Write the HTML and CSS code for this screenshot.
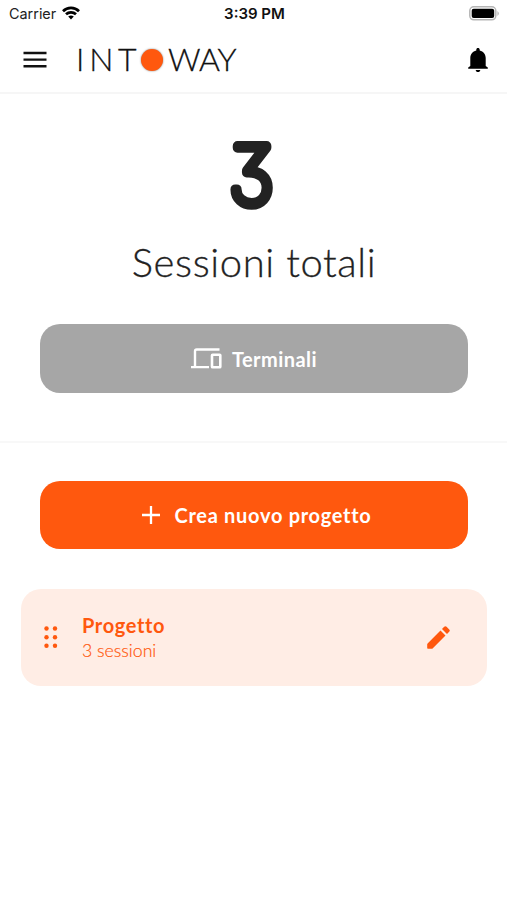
FILE: index.html
```
<!DOCTYPE html>
<html lang="it">
<head>
<meta charset="utf-8">
<title>Intoway</title>
<link rel="stylesheet" href="styles.css">
</head>
<body>
<div class="status">
  <div class="carrier"><span>Carrier</span>
    <svg width="18" height="14" viewBox="0 0 18 14" fill="none" stroke="#000" stroke-width="2.7"><path d="M1 5.2C5.5.7 12.500.7 17 5.200"/><path d="M4 8.300c2.800-2.700 7.200-2.700 10 0"/><path d="M6.200 10.600Q9 8.300 11.800 10.600L9 13.600z" fill="#000" stroke="none"/></svg>
  </div>
  <span class="time">3:39 PM</span>
  <svg class="battery" width="31" height="15" viewBox="0 0 31 15"><rect x=".8" y=".8" width="26" height="13" rx="4" fill="#fff" stroke="#b5b5b5" stroke-width="1.500"/><rect x="2.700" y="2.700" width="22.500" height="9.300" rx="2" fill="#000"/><path d="M28.500 5q2.500 2.300 0 5z" fill="#aaa"/></svg>
</div>
<header class="header">
  <svg class="menu" width="24" height="17" viewBox="0 0 24 17" stroke="#111" stroke-width="2.400"><path d="M.5 2h23M.5 8.600h23M.5 15.200h23"/></svg>
  <div class="logo"><span class="int">INT</span><i class="dot"></i><span class="way">WAY</span></div>
  <svg class="bell" width="20" height="24" viewBox="0 0 20 24"><path d="M10 0c1 0 1.700.7 1.700 1.700v.7c3.700.8 6 3.800 6 7.600v8l2.100 1.600v1.200H.2v-1.200L2.300 18v-8c0-3.800 2.300-6.800 6-7.600v-.7C8.300.7 9 0 10 0zM7.700 21.900h4.600c0 1.200-1 2.100-2.300 2.100s-2.300-.9-2.300-2.100z"/></svg>
</header>
<section class="summary">
  <svg class="count" width="60" height="100" viewBox="0 0 60 100"><text x="0" y="0" text-anchor="middle" transform="translate(27.500 78) scale(.95 1)">3</text></svg>
  <div class="label"><span>Sessioni totali</span></div>
  <button class="btn gray">
    <svg width="31" height="21" viewBox="0 0 31 21" fill="none" stroke="#fff" stroke-width="2.400"><path d="M28.500 1.500H5.700Q4 1.500 4 3.200V18.300M0 19.100h18" /><rect x="21" y="6.700" width="8.300" height="12.600" rx=".6" stroke-width="2.600"/></svg>
    <span class="t1">Terminali</span>
  </button>
</section>
<main class="projects">
  <button class="btn orange">
    <svg width="18" height="18" viewBox="0 0 18 18" stroke="#fff" stroke-width="2.300"><path d="M9 0v18M0 9h18"/></svg>
    <span class="t2">Crea nuovo progetto</span>
  </button>
  <article class="card">
    <svg width="14" height="23" viewBox="0 0 14 23" fill="#ff580e"><circle cx="2.500" cy="2.500" r="2.200"/><circle cx="11" cy="2.500" r="2.200"/><circle cx="2.500" cy="11.200" r="2.200"/><circle cx="11" cy="11.200" r="2.200"/><circle cx="2.500" cy="19.800" r="2.200"/><circle cx="11" cy="19.800" r="2.200"/></svg>
    <div class="info"><div class="name">Progetto</div><div class="sub">3 sessioni</div></div>
    <svg class="edit" width="23" height="23" viewBox="0 0 23 23" fill="#ff580e"><path d="M.9 22.800Q.2 22.800.2 22.100V18.300q0-.5.400-.9L13.500 4.500l5 5L5.600 22.400q-.4.400-.9.400zM15 3l2.200-2.200q1.200-1.200 2.400 0l2.600 2.600q1.200 1.200 0 2.400L20 8z"/></svg>
  </article>
</main>
</body>
</html>
```
FILE: styles.css
```
* { box-sizing: border-box; }
body { margin: 0; background: #fff; color: #222; font-family: Lato, "Liberation Sans", sans-serif; }
svg { display: block; flex: none; }
.status { display: grid; grid-template-columns: 1fr auto 1fr; align-items: center; height: 27px; padding: 0 7px 0 9px; font: 14.400px/27px Inter, sans-serif; color: #222; }
.carrier { display: flex; align-items: center; gap: 6px; }
.carrier svg { margin-top: -2px; }
.time { font-size: 15px; font-weight: 600; color: #111; }
.battery { justify-self: end; margin-top: -1px; }
.header { display: flex; align-items: center; height: 67px; padding: 0 19px 0 23px; border-bottom: 2px solid #f6f6f6; }
.logo { display: flex; align-items: center; margin-left: 28px; font-size: 32px; font-weight: 300; line-height: 38px; padding-bottom: 1px; color: #111; -webkit-text-stroke: .3px #111; }
.int { margin-left: 1px; letter-spacing: 4.800px; }
.way { margin-left: 5px; letter-spacing: -.3px; }
.dot { width: 22px; height: 22px; margin-top: 2px; margin-left: -.5px; border-radius: 50%; background: #ff580e; box-shadow: 0 0 2px #777; }
.bell { margin-left: auto; }
.summary { height: 349px; padding: 32px 39px 0 40px; border-bottom: 2px solid #f8f8f8; text-align: center; }
.count { margin: 0 auto; overflow: visible; }
.count text { font-family: Inter, sans-serif; font-feature-settings: "cv09"; font-size: 80px; font-weight: 100; fill: #222; stroke: #222; stroke-width: 10px; stroke-linejoin: round; }
.label { height: 98px; padding-top: 12px; font-size: 40px; line-height: 48px; font-weight: 300; letter-spacing: .600px; -webkit-text-stroke: .3px #222; }
.btn { display: flex; align-items: center; justify-content: center; width: 100%; height: 69px; padding: 0; border: 0; border-radius: 20px; color: #fff; font-family: inherit; font-size: 20px; font-weight: 700; }
.gray { gap: 10px; background: #a6a6a6; letter-spacing: .450px; }
.orange { gap: 15px; background: #ff580e; letter-spacing: .700px; }
.projects { padding: 38px 20px 0 21px; }
.projects .btn { width: 428px; height: 68px; margin-left: 19px; padding-left: 5px; }
.card { display: flex; align-items: center; height: 97px; margin-top: 40px; padding: 0 37px 0 23px; border-radius: 20px; background: #ffede5; color: #ff580e; }
.info { margin-left: 24px; }
.name { font-size: 20px; line-height: 26px; font-weight: 700; letter-spacing: .650px; }
.sub { font-size: 17.700px; line-height: 25px; font-weight: 300; -webkit-text-stroke: .2px #ff580e; }
.edit { margin-left: auto; }
```
